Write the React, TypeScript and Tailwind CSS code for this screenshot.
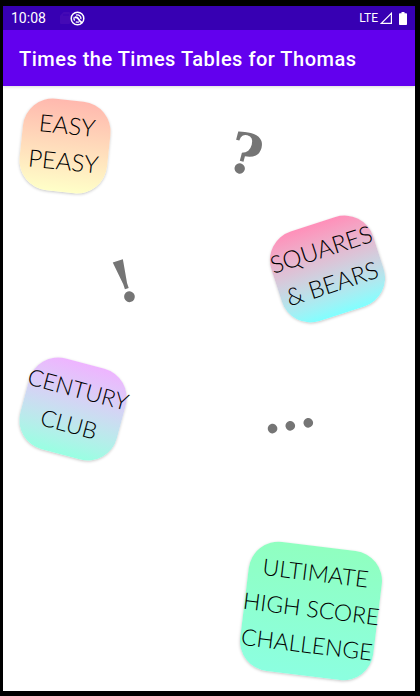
type ModeProps = { lines: string[]; className: string };

function ModeButton({ lines, className }: ModeProps) {
  return (
    <button
      type="button"
      className={`flex shrink-0 flex-col items-center justify-center whitespace-nowrap rounded-[30px] bg-linear-to-b pb-1.5 font-['Lato',sans-serif] leading-9 font-light text-black shadow-[0_1px_3px_rgba(0,0,0,0.22)] ${className}`}
    >
      {lines.map((line) => (
        <span key={line}>{line}</span>
      ))}
    </button>
  );
}

const markStyle =
  "font-['DejaVu_Serif',serif] font-bold leading-[56px] text-[#757575]";

function StatusBar() {
  return (
    <div className="flex h-6 items-center bg-[#3700b3] px-2 text-white">
      <span className="text-[14px] leading-6">10:08</span>
      <svg className="ml-3.5 h-3 w-2.5" viewBox="0 0 10 12" aria-hidden="true">
        <path d="M3.5 0H9a1 1 0 0 1 1 1v10a1 1 0 0 1-1 1H1a1 1 0 0 1-1-1V3.500z" fill="#4409b5" />
        <path d="M4 2v2M6 2v2M8 2v2" stroke="#3700b3" />
      </svg>
      <svg className="h-[15px] w-[15px]" viewBox="0 0 15 15" fill="none" aria-hidden="true">
        <circle cx="7.500" cy="7.500" r="6.300" stroke="#fff" strokeWidth="1.500" />
        <path d="M4.600 9.600A3.600 3.600 0 0 1 4.300 6M6 4.200A3.600 3.600 0 0 1 10.900 8.200M5.800 10.700A3.600 3.600 0 0 0 9 10.900" stroke="#fff" strokeWidth="1.300" />
        <path d="M4.800 6.300Q7.500 6 8.600 8.200T12 11.800" stroke="#fff" strokeWidth="1.800" />
      </svg>
      <span className="ml-auto text-[12px] leading-6">LTE</span>
      <svg className="ml-0.5 h-3 w-3" viewBox="0 0 12 12" fill="none" aria-hidden="true">
        <path d="M1.300 11.400L11.400 1.300V11.400Z" stroke="#fff" strokeWidth="1.200" />
      </svg>
      <svg className="ml-[7px] h-[13px] w-2" viewBox="0 0 8 13" aria-hidden="true">
        <path d="M2.500 0h3v1.300H7.200a.8.8 0 0 1 .8.8v10.100a.8.8 0 0 1-.8.8H.8a.8.8 0 0 1-.8-.8V2.100a.8.8 0 0 1 .8-.8H2.500z" fill="#fff" />
      </svg>
    </div>
  );
}

export default function App() {
  return (
    <div className="flex min-h-screen flex-col border-t-6 border-r-5 border-b-5 border-l-3 border-black bg-white font-['Roboto',sans-serif]">
      <header className="shadow-[0_1px_3px_rgba(0,0,0,0.15)]">
        <StatusBar />
        <div className="flex h-14 items-center bg-[#6200ee] px-4 pt-0.5">
          <h1 className="text-[20px] leading-7 font-medium tracking-wide whitespace-nowrap text-white">
            Times the Times Tables for Thomas
          </h1>
        </div>
      </header>

      <main className="flex flex-1">
        <div className="flex flex-1 flex-col items-start pt-3.5 pl-4">
          <ModeButton
            lines={["EASY", "PEASY"]}
            className="ml-0.5 h-[92px] w-[88px] rotate-6 from-[#ffb8ae] to-[#ffffc8] text-[24px]"
          />
          <span className={`mt-[62px] ml-[93px] -rotate-18 text-[58px] ${markStyle}`}>!</span>
          <ModeButton
            lines={["CENTURY", "CLUB"]}
            className="mt-13 ml-1 h-[94px] w-[100px] rotate-15 from-[#eeb4ff] to-[#98ffe2] text-[23px]"
          />
        </div>

        <div className="flex flex-1 flex-col items-end pt-10 pr-8 pb-[15px]">
          <span className={`mr-[121px] rotate-15 text-[56px] ${markStyle}`}>?</span>
          <ModeButton
            lines={["SQUARES", "& BEARS"]}
            className="mt-10 mr-0.5 h-[94px] w-[107px] -rotate-18 from-[#ff8fb9] to-[#80ffff] text-[24px]"
          />
          <span className={`mt-17 mr-[68px] -rotate-9 text-[52px] ${markStyle}`}>...</span>
          <ModeButton
            lines={["ULTIMATE", "HIGH SCORE", "CHALLENGE"]}
            className="mt-auto mr-[5px] h-[130px] w-[134px] rotate-7 from-[#90ffc0] to-[#8cffe0] text-[23px]"
          />
        </div>
      </main>
    </div>
  );
}
